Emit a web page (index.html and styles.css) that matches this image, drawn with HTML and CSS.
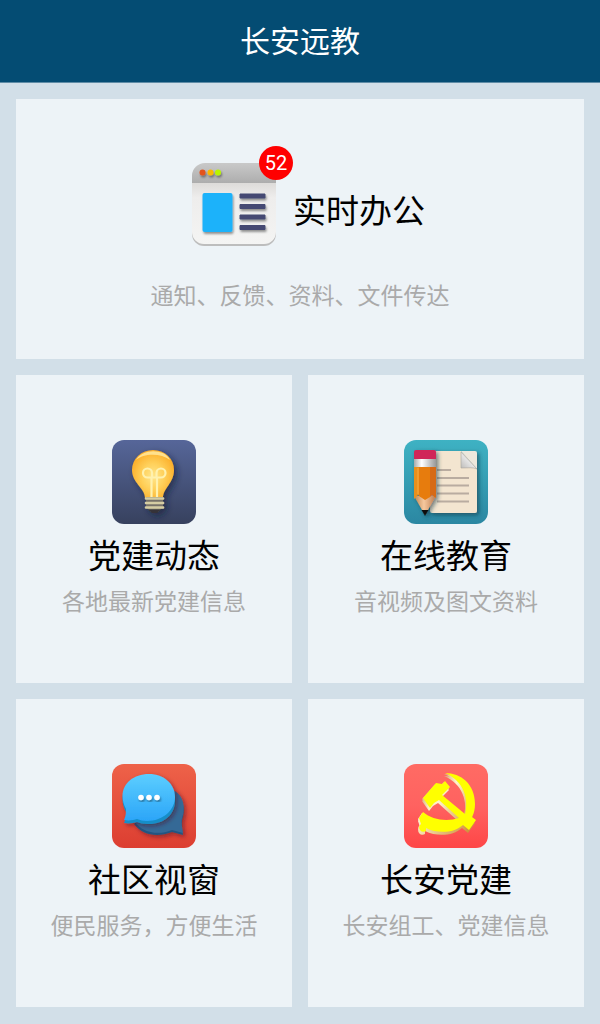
FILE: index.html
```html
<!DOCTYPE html>
<html lang="zh-CN">
<head>
<meta charset="utf-8">
<meta name="viewport" content="width=device-width, initial-scale=1">
<title>长安远教</title>
<link rel="stylesheet" href="styles.css">
</head>
<body>
<header class="topbar"><h1 class="topbar-title">长安远教</h1></header>
<main class="tiles">
  <a class="tile tile-wide" href="#office">
    <span class="office-row">
      <span class="icon-wrap">
        <svg class="icon" viewBox="0 0 84 84" aria-hidden="true">
          <defs>
            <linearGradient id="winBar" x2="0" y2="1"><stop stop-color="#c9c9c9"/><stop offset="1" stop-color="#adadad"/></linearGradient>
            <linearGradient id="winBody" x2="0" y2="1"><stop stop-color="#dcdad8"/><stop offset=".25" stop-color="#eeedec"/><stop offset="1" stop-color="#f4f4f3"/></linearGradient>
            <filter id="soft" x="-30%" y="-30%" width="160%" height="160%"><feDropShadow dx="1" dy="2" stdDeviation="1" flood-opacity=".4"/></filter>
          </defs>
          <rect x="0" y="2" width="84" height="81" rx="12" fill="#bdbdbd"/>
          <path d="M0 19h84v50a12 12 0 0 1-12 12H12A12 12 0 0 1 0 69z" fill="url(#winBody)"/>
          <path d="M0 20v-7A13 13 0 0 1 13 0h58a13 13 0 0 1 13 13v7z" fill="url(#winBar)"/>
          <g filter="url(#soft)">
            <circle cx="10.500" cy="9.500" r="3" fill="#e4521b"/><circle cx="18.500" cy="9.500" r="3" fill="#fbb900"/><circle cx="26" cy="9.500" r="3" fill="#b9f500"/>
            <rect x="10.500" y="30" width="30" height="39" rx="2" fill="#1eb2fa"/>
            <path d="M48 31h25v4H48zM48 41.500h25v4H48zM48 52h25v4H48zM48 62.500h25v4H48z" fill="#454a73" stroke="#454a73" stroke-linejoin="round"/>
          </g>
        </svg>
        <span class="badge">52</span>
      </span>
      <span class="tile-title">实时办公</span>
    </span>
    <span class="tile-note">通知、反馈、资料、文件传达</span>
  </a>

  <a class="tile" href="#news">
    <svg class="icon" viewBox="0 0 84 84" aria-hidden="true">
      <defs>
        <linearGradient id="navy" x2="0" y2="1"><stop stop-color="#566699"/><stop offset="1" stop-color="#37415e"/></linearGradient>
        <radialGradient id="glow" cx=".5" cy=".55" r=".6"><stop stop-color="#ffe68c"/><stop offset=".45" stop-color="#ffd05a"/><stop offset="1" stop-color="#fba820"/></radialGradient>
        <filter id="bulbShade" x="-40%" y="-20%" width="190%" height="150%"><feDropShadow dx="3" dy="3" stdDeviation="3" flood-color="#121a38" flood-opacity=".6"/></filter>
      </defs>
      <rect width="84" height="84" rx="12" fill="url(#navy)"/>
      <g filter="url(#bulbShade)">
        <path d="M33 58c0-10-13-15-13-28a21 20 0 0 1 42 0c0 13-11 18-11 28z" fill="url(#glow)"/>
        <path d="M24 20c6-11 28-12 34 0-9-7-26-7-34 0z" fill="#ffe18d"/>
        <path d="M34 57h17v10l-5 5h-7l-5-5z" fill="#777269"/>
        <path d="M34 58.500h17M34 63h17M34 67.500h17" stroke="#d5cda3" stroke-width="2.500" stroke-linecap="round"/>
        <path d="M36 69.500h13l-4 3.500h-5z" fill="#343337"/>
      </g>
      <path d="M39.500 57V37.500h-4a4.500 4.500 0 1 1 4.500-4.500v4M45 57V37.500h4a4.500 4.500 0 1 0-4.500-4.500v4M36 37.500h13" fill="none" stroke="#fff1ae" stroke-width="2.200"/>
    </svg>
    <span class="tile-title">党建动态</span>
    <span class="tile-note">各地最新党建信息</span>
  </a>

  <a class="tile" href="#education">
    <svg class="icon" viewBox="0 0 84 84" aria-hidden="true">
      <defs>
        <linearGradient id="teal" x2="0" y2="1"><stop stop-color="#3eb2c3"/><stop offset="1" stop-color="#2b87a2"/></linearGradient>
        <linearGradient id="curl" x1="1" x2="0" y2="1"><stop stop-color="#aaa"/><stop offset=".5" stop-color="#e8e8e8"/><stop offset="1" stop-color="#bcbab8"/></linearGradient>
        <linearGradient id="ferrule"><stop stop-color="#aaa"/><stop offset=".35" stop-color="#fff"/><stop offset="1" stop-color="#999"/></linearGradient>
        <linearGradient id="wood"><stop stop-color="#bd844f"/><stop offset=".45" stop-color="#f6c89e"/><stop offset="1" stop-color="#b9794d"/></linearGradient>
        <filter id="paperShade" x="-20%" y="-20%" width="150%" height="150%"><feDropShadow dx="2" dy="2" stdDeviation="2" flood-color="#0b3340" flood-opacity=".6"/></filter>
      </defs>
      <rect width="84" height="84" rx="12" fill="url(#teal)"/>
      <g filter="url(#paperShade)">
        <path d="M28 11h29l16 18v42q0 2-2 2H28q-2 0-2-2V13q0-2 2-2z" fill="#f3e5d0"/>
        <path d="M57 11h14q2 0 2 2v16z" fill="#eee8dc"/>
      </g>
      <path d="M57 12l16 17c-4-2-9-1-16-1z" fill="url(#curl)" stroke="#aaa49c" stroke-width=".6"/>
      <path d="M33 30h14M33 38h32M33 45.500h32M33 53.500h32M33 61.500h32" stroke="#b9aca0" stroke-width="2.200"/>
      <g filter="url(#paperShade)">
        <path d="M10 56h22L21 75z" fill="url(#wood)"/>
        <path d="M17.500 70h7L21 76z" fill="#111"/>
        <path d="M10 27h7v30l-3-2-4 4z" fill="#e9901e"/>
        <path d="M15 27h11v30l-5 3-6-4z" fill="#e77c0b"/>
        <path d="M26 27h6v31l-4-3-2 2z" fill="#d66a12"/>
        <path d="M14 28v26" stroke="#f5a035" stroke-width="1.500"/>
        <rect x="10" y="19" width="22" height="8" fill="url(#ferrule)"/>
        <path d="M10 19v-7q0-2 2-2h18q2 0 2 2v7z" fill="#d02658"/>
      </g>
    </svg>
    <span class="tile-title">在线教育</span>
    <span class="tile-note">音视频及图文资料</span>
  </a>

  <a class="tile" href="#community">
    <svg class="icon" viewBox="0 0 84 84" aria-hidden="true">
      <defs>
        <linearGradient id="brick" x2="0" y2="1"><stop stop-color="#ee6249"/><stop offset="1" stop-color="#dc3e31"/></linearGradient>
        <linearGradient id="sky" x2="0" y2="1"><stop stop-color="#5cceff"/><stop offset="1" stop-color="#2ba5f8"/></linearGradient>
        <filter id="chatShade" x="-20%" y="-20%" width="150%" height="150%"><feDropShadow dx="2" dy="2" stdDeviation="2" flood-color="#4d1525" flood-opacity=".55"/></filter>
      </defs>
      <rect width="84" height="84" rx="12" fill="url(#brick)"/>
      <g filter="url(#chatShade)">
        <path d="M63 29c8 5 11 16 7 27-1 4 0 9 1 15l-11-3c-15 6-30 3-38-8z" fill="#245581"/>
        <path d="M63 27c8 5 11 16 7 27-1 4 0 9 1 15l-11-3c-15 6-30 2-37-8z" fill="#356996"/>
      </g>
      <g filter="url(#chatShade)">
        <path d="M37 13c15 0 26 10 26 24S51 61 35 60c-4 0-7-1-10-2-3 1-8 2-13 1 2-4 2-8 2-11C4 29 17 13 37 13z" fill="#158ec8"/>
        <path d="M37 10c15 0 26 10 26 23S51 57 35 57c-4 0-7-1-10-2-3 1-8 2-13 1 2-4 2-8 2-11C4 26 17 10 37 10z" fill="url(#sky)"/>
      </g>
      <g fill="#fff" filter="url(#soft)"><circle cx="29" cy="33.500" r="2.800"/><circle cx="37" cy="33.500" r="2.800"/><circle cx="45" cy="33.500" r="2.800"/></g>
    </svg>
    <span class="tile-title">社区视窗</span>
    <span class="tile-note">便民服务，方便生活</span>
  </a>

  <a class="tile" href="#party">
    <svg class="icon" viewBox="0 0 84 84" aria-hidden="true">
      <defs>
        <linearGradient id="coral" x2="0" y2="1"><stop stop-color="#ff6b64"/><stop offset=".5" stop-color="#ff6260"/><stop offset="1" stop-color="#fe4647"/></linearGradient>
        <linearGradient id="edge" x2="1" y2="1"><stop stop-color="#a85a18"/><stop offset=".4" stop-color="#fff4ce"/><stop offset="1" stop-color="#c98325"/></linearGradient>
        <g id="emblem">
          <path d="M41 9C57 9 71 20 71 40c0 5-1 9-3 13l4 3-7 10-6-5c-9 8-25 9-37 3v3a4 4 0 1 1-5-7l-2-6 4-6c9 8 24 10 36 6L35 36l-5 3-4 5-7-10 13-15 6 1 3-3 5 6-8 8 23 19C65 35 60 17 41 9z"/>
        </g>
      </defs>
      <rect width="84" height="84" rx="12" fill="url(#coral)"/>
      <use href="#emblem" x="-1" y="3" fill="url(#edge)"/>
      <use href="#emblem" x="-1" y="1" fill="url(#edge)"/>
      <use href="#emblem" fill="#ff0"/>
    </svg>
    <span class="tile-title">长安党建</span>
    <span class="tile-note">长安组工、党建信息</span>
  </a>
</main>
</body>
</html>
```
FILE: styles.css
```css
* { box-sizing: border-box; }

body {
  margin: 0;
  min-height: 100vh;
  display: flex;
  flex-direction: column;
  background: #d2dfe8;
  color: #000;
  font-family: Roboto, "Noto Sans CJK SC", sans-serif;
}

.topbar {
  padding: 21px 16px 19px;
  background: #044c73;
  border-bottom: 1px solid #5f8ca6;
  color: #fff;
  text-align: center;
}

.topbar-title {
  margin: 0;
  font-size: 30px;
  line-height: 42px;
  font-weight: 400;
}

.tiles {
  flex: 1;
  display: grid;
  grid-template-columns: 1fr 1fr;
  grid-template-rows: 260fr 308fr 308fr;
  gap: 16px;
  padding: 16px 16px 17px;
}

.tile {
  display: flex;
  flex-direction: column;
  align-items: center;
  justify-content: center;
  background: #edf3f7;
  color: inherit;
  text-decoration: none;
}

.tile-wide { grid-column: 1 / -1; }

.icon {
  display: block;
  width: 84px;
  height: 84px;
}

.tile-title {
  margin-top: 13px;
  font-size: 33px;
  line-height: 40px;
}

.tile-note {
  margin-top: 10px;
  color: #aaa;
  font-size: 23px;
  line-height: 32px;
}

.office-row {
  display: flex;
  align-items: flex-end;
}

.office-row .tile-title { margin-bottom: 15px; }

.tile-wide .tile-note { margin-top: 34px; }

.icon-wrap {
  position: relative;
  padding: 17px 17px 0;
}

.badge {
  position: absolute;
  top: 0;
  right: 0;
  width: 34px;
  height: 34px;
  border-radius: 50%;
  background: #f00;
  color: #fff;
  font-size: 20px;
  line-height: 34px;
  text-align: center;
}
```
